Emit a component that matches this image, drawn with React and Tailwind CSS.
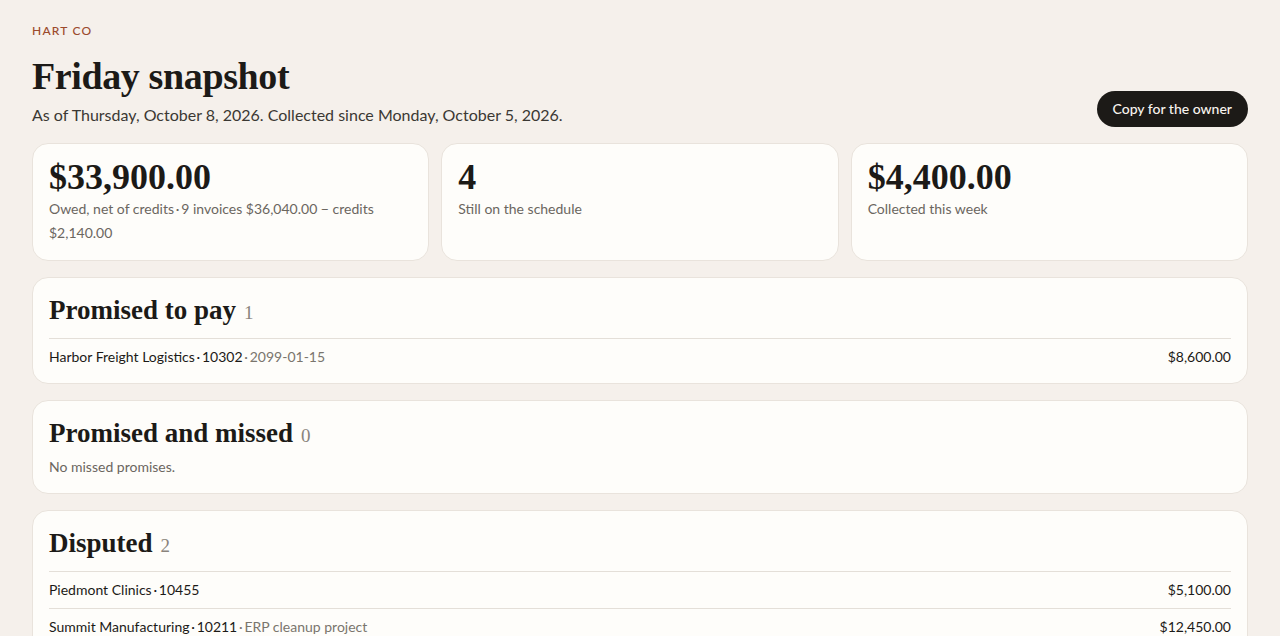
import React from "react";

const sans = { fontFamily: "Lato, 'Noto Sans', sans-serif" };
const serif = { fontFamily: "'Liberation Serif', 'DejaVu Serif', serif" };

const stats = [
  {
    value: "$33,900.00",
    note: "Owed, net of credits\u2009·\u20099 invoices $36,040.00 − credits $2,140.00",
  },
  { value: "4", note: "Still on the schedule" },
  { value: "$4,400.00", note: "Collected this week" },
];

const sections = [
  {
    title: "Promised to pay",
    count: 1,
    rows: [
      { name: "Harbor Freight Logistics\u2009·\u200910302", extra: "2099-01-15", amount: "$8,600.00" },
    ],
  },
  { title: "Promised and missed", count: 0, empty: "No missed promises." },
  {
    title: "Disputed",
    count: 2,
    rows: [
      { name: "Piedmont Clinics\u2009·\u200910455", amount: "$5,100.00" },
      { name: "Summit Manufacturing\u2009·\u200910211", extra: "ERP cleanup project", amount: "$12,450.00" },
    ],
  },
];

const Section = ({ s }) => (
  <section className="rounded-2xl border border-[#e9e3dc] bg-[#fefdfa] px-4 pt-[14px] pb-2">
    <h2 className="flex items-baseline gap-2 pb-[10px]" style={serif}>
      <span className="text-[27px] font-bold leading-[36px] text-[#1c1a17]">{s.title}</span>
      <span className="text-[19px] text-[#8a847c]">{s.count}</span>
    </h2>
    {s.empty ? (
      <p className="-mt-1 pb-2 text-sm leading-[20px] text-[#6b665f]">{s.empty}</p>
    ) : (
      s.rows.map((r) => (
        <div
          key={r.name}
          className="flex items-center justify-between border-t border-[#e4dfd8] py-[8px] text-sm leading-[20px]"
        >
          <span className="text-[#1c1a17]">
            {r.name}
            {r.extra && <span className="text-[#7a756d]">{"\u2009·\u2009"}{r.extra}</span>}
          </span>
          <span className="text-[#1c1a17]">{r.amount}</span>
        </div>
      ))
    )}
  </section>
);

const App = () => {
  return (
    <div className="min-h-screen bg-[#f5f0eb] px-8 pt-[22px] pb-8" style={sans}>
      <header className="flex items-end justify-between">
        <div>
          <p className="text-[12px] font-medium tracking-[0.1em] text-[#9b4a2c]">HART CO</p>
          <h1 className="mt-[13px] text-[38px] font-bold leading-[46px] tracking-[-0.01em] text-[#1c1a17]" style={serif}>
            Friday snapshot
          </h1>
          <p className="mt-[4px] text-[16px] leading-[24px] text-[#3b3833]">
            As of Thursday, October 8, 2026. Collected since Monday, October 5, 2026.
          </p>
        </div>
        <button className="h-9 rounded-full bg-[#1c1a17] px-4 text-sm font-medium text-[#f8f4ee]">
          Copy for the owner
        </button>
      </header>

      <div className="mt-[16px] grid grid-cols-3 gap-3">
        {stats.map((st) => (
          <div key={st.value} className="min-h-[118px] rounded-2xl border border-[#e9e3dc] bg-[#fefdfa] px-4 pt-[15px] pb-[14px]">
            <div className="text-[36px] font-bold leading-[36px] text-[#1c1a17]" style={serif}>
              {st.value}
            </div>
            <p className="mt-[2px] text-sm leading-[24px] text-[#6b665f]">{st.note}</p>
          </div>
        ))}
      </div>

      <div className="mt-4 flex flex-col gap-4">
        {sections.map((s) => (
          <Section key={s.title} s={s} />
        ))}
      </div>
    </div>
  );
};

export default App;
